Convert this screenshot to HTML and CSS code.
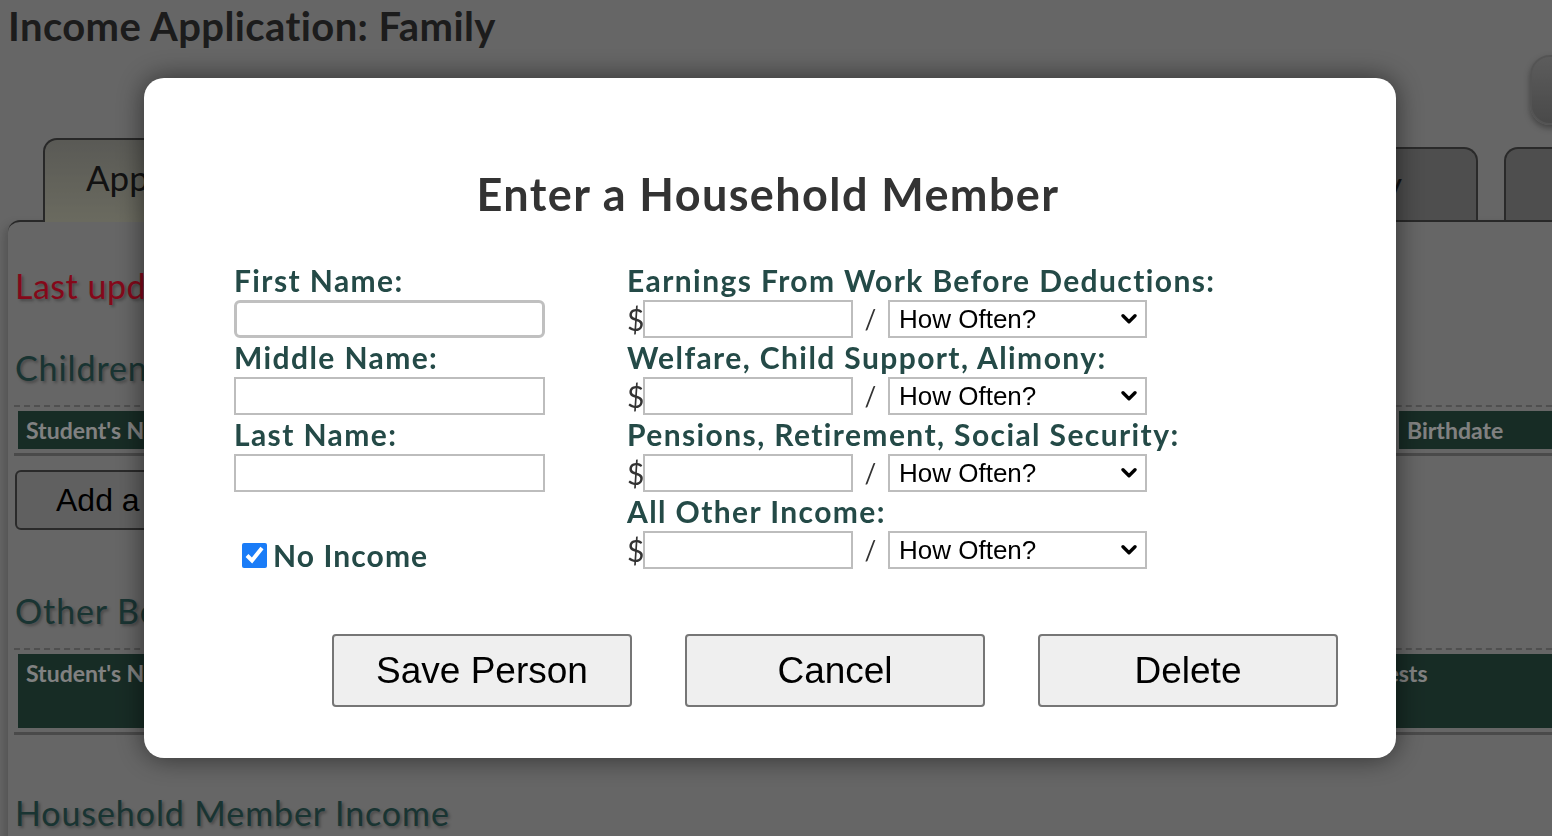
FILE: index.html
```html
<!DOCTYPE html>
<html lang="en">
<head>
<meta charset="utf-8">
<title>Income Application: Family</title>
<link rel="stylesheet" href="styles.css">
</head>
<body>
<div class="page">
  <h1 class="page-title">Income Application: Family</h1>
  <div class="toolbar"><button class="top-btn" type="button">Log Out</button></div>
  <div class="tabs">
    <div class="tab tab-active">Application</div>
    <div class="tab">Household</div>
    <div class="tab tab-end">Household Summary</div>
    <div class="tab tab-center">Submit</div>
  </div>
  <div class="panel">
    <p class="updated">Last updated: never</p>
    <h2 class="section">Children</h2>
    <div class="thead">
      <div class="th" style="width:420px">Student's Name</div>
      <div class="th" style="width:480px">School</div>
      <div class="th" style="width:469px">Grade</div>
      <div class="th th-last">Birthdate</div>
    </div>
    <button class="add-btn" type="button">Add a Child</button>
    <h2 class="section section-other">Other Benefits</h2>
    <div class="thead thead-tall">
      <div class="th" style="width:420px">Student's Name</div>
      <div class="th" style="width:480px">Program</div>
      <div class="th" style="width:400px">Case Number</div>
      <div class="th th-last">Interests</div>
    </div>
    <h2 class="section section-income">Household Member Income</h2>
  </div>
</div>

<div class="overlay">
  <div class="modal">
    <h2 class="modal-title">Enter a Household Member</h2>
    <div class="form">
      <div class="col-names">
        <label class="lbl" for="fn">First Name:</label>
        <input class="txt txt-focus" id="fn" type="text">
        <label class="lbl" for="mn">Middle Name:</label>
        <input class="txt" id="mn" type="text">
        <label class="lbl" for="ln">Last Name:</label>
        <input class="txt" id="ln" type="text">
        <label class="noinc"><input class="chk" type="checkbox" checked>No Income</label>
      </div>
      <div class="col-income">
        <div class="lbl">Earnings From Work Before Deductions:</div>
        <div class="inc-row">
          <span class="cur">$</span><input class="amt" type="text"><span class="slash">/</span>
          <div class="sel-wrap"><select class="sel"><option>How Often?</option></select><svg class="chev" viewBox="0 0 14 9"><path d="M1.6 1.6 L7 7 L12.4 1.6" /></svg></div>
        </div>
        <div class="lbl">Welfare, Child Support, Alimony:</div>
        <div class="inc-row">
          <span class="cur">$</span><input class="amt" type="text"><span class="slash">/</span>
          <div class="sel-wrap"><select class="sel"><option>How Often?</option></select><svg class="chev" viewBox="0 0 14 9"><path d="M1.6 1.6 L7 7 L12.4 1.6" /></svg></div>
        </div>
        <div class="lbl">Pensions, Retirement, Social Security:</div>
        <div class="inc-row">
          <span class="cur">$</span><input class="amt" type="text"><span class="slash">/</span>
          <div class="sel-wrap"><select class="sel"><option>How Often?</option></select><svg class="chev" viewBox="0 0 14 9"><path d="M1.6 1.6 L7 7 L12.4 1.6" /></svg></div>
        </div>
        <div class="lbl">All Other Income:</div>
        <div class="inc-row">
          <span class="cur">$</span><input class="amt" type="text"><span class="slash">/</span>
          <div class="sel-wrap"><select class="sel"><option>How Often?</option></select><svg class="chev" viewBox="0 0 14 9"><path d="M1.6 1.6 L7 7 L12.4 1.6" /></svg></div>
        </div>
      </div>
    </div>
    <div class="actions">
      <button class="btn" type="button">Save Person</button>
      <button class="btn" type="button">Cancel</button>
      <button class="btn" type="button">Delete</button>
    </div>
  </div>
</div>
</body>
</html>
```

FILE: styles.css
```css
* { box-sizing: border-box; }
html, body { margin: 0; height: 100%; overflow: hidden; }
body {
  background: #bababa;
  font-family: Lato, "Open Sans", sans-serif;
}

/* ---------- background page ---------- */
.page { width: 1552px; padding: 2px 0 0 8px; }
.page-title {
  margin: 0;
  font-size: 40px;
  line-height: 48px;
  font-weight: 700;
  letter-spacing: 0.4px;
  color: #333;
}
.toolbar { display: flex; justify-content: flex-end; margin-top: 5px; height: 70px; }
.top-btn {
  width: 200px;
  height: 70px;
  margin-right: -178px;
  border: 2px solid #9a9a9a;
  border-radius: 20px;
  background: linear-gradient(#a8a8a8, #868686);
  box-shadow: 0 3px 6px rgba(0,0,0,.35);
  color: transparent;
}
.tabs {
  display: flex;
  align-items: flex-end;
  gap: 26px;
  height: 82px;
  margin: 13px 0 0 35px;
  position: relative;
  z-index: 1;
}
.tab {
  flex: 0 0 461px;
  height: 73px;
  border: 2px solid #4d4d4d;
  border-bottom: none;
  border-radius: 14px 14px 0 0;
  background: #8e8e8e;
  padding: 12px 0 0 41px;
  font-size: 35px;
  line-height: 44px;
  color: #222;
  white-space: nowrap;
  overflow: hidden;
}
.tab-end { text-align: right; padding: 12px 74px 0 0; }
.tab-center { text-align: center; padding: 12px 0 0 0; }
.tab-active {
  height: 84px;
  margin-bottom: -2px;
  padding-top: 15px;
  background: linear-gradient(#a4a49c, #c2c2ae);
  border-color: #494949;
}
.panel {
  margin-right: -40px;
  border-top: 2px solid #4a4a4a;
  border-top-left-radius: 12px;
  box-shadow: -4px 4px 8px rgba(0,0,0,.18);
  padding: 0 0 40px 7px;
  height: 700px;
}
.updated {
  margin: 44px 0 0;
  font-size: 34px;
  line-height: 40px;
  letter-spacing: 0.5px;
  color: #f01030;
  text-shadow: 2px 2px 3px rgba(0,0,0,.3);
}
.section {
  margin: 42px 0 0;
  font-size: 34px;
  line-height: 40px;
  font-weight: 400;
  letter-spacing: 0.9px;
  color: #2f5f5c;
  text-shadow: 2px 2px 3px rgba(0,0,0,.3);
}
.thead {
  display: flex;
  gap: 4px;
  margin: 17px 0 0 -1px;
  padding: 4px;
  border-top: 2px dashed #909090;
  border-bottom: 3px solid #878787;
}
.th {
  flex: 0 0 auto;
  height: 38px;
  background: #2b5044;
  color: #ececec;
  font-weight: 700;
  font-size: 23px;
  line-height: 24px;
  padding: 7px 8px;
  white-space: nowrap;
  overflow: hidden;
}
.th-last { flex: 1 1 auto; }
.thead-tall .th { height: 74px; }
.add-btn {
  display: block;
  margin-top: 14px;
  width: 300px;
  height: 60px;
  border: 2px solid #4d4d4d;
  border-radius: 6px;
  background: #b0b0b0;
  font-family: "Liberation Sans", Arial, sans-serif;
  font-size: 32px;
  text-align: left;
  padding-left: 39px;
  color: #000;
}
.section-other { margin-top: 61px; }
.section-income { margin-top: 58px; }

/* ---------- modal ---------- */
.overlay {
  position: fixed;
  inset: 0;
  background: rgba(0,0,0,.45);
  z-index: 10;
}
.modal {
  position: absolute;
  left: 144px;
  top: 78px;
  width: 1252px;
  height: 680px;
  background: #fff;
  border-radius: 20px;
  box-shadow: 0 0 28px rgba(0,0,0,.55);
  padding-top: 88px;
}
.modal-title {
  margin: 0 0 0 -4px;
  text-align: center;
  font-size: 45px;
  line-height: 56px;
  font-weight: 700;
  letter-spacing: 1.4px;
  color: #333;
}
.form {
  display: flex;
  margin-top: 39px;
  padding-left: 90px;
}
.col-names {
  width: 393px;
  display: flex;
  flex-direction: column;
  align-items: flex-start;
}
.lbl {
  display: block;
  font-size: 30px;
  line-height: 39px;
  font-weight: 700;
  letter-spacing: 1.4px;
  color: #244a47;
  white-space: nowrap;
}
.txt {
  width: 311px;
  height: 38px;
  margin: 0;
  border: 2px solid #bdbdbd;
  border-radius: 0;
  background: #fff;
  outline: none;
}
.txt-focus {
  border: 3px solid #c0c0c0;
  border-radius: 6px;
}
.noinc {
  display: flex;
  align-items: center;
  margin-top: 43px;
  font-size: 30px;
  line-height: 40px;
  font-weight: 700;
  letter-spacing: 1.1px;
  color: #244a47;
}
.chk {
  width: 25px;
  height: 25px;
  margin: 0 6px 0 8px;
  accent-color: #1a7cf7;
}
.inc-row {
  display: flex;
  align-items: center;
  height: 38px;
}
.cur {
  width: 16px;
  font-size: 30px;
  line-height: 38px;
  color: #333;
}
.amt {
  width: 210px;
  height: 38px;
  margin: 0;
  border: 2px solid #bdbdbd;
  border-radius: 0;
}
.slash {
  width: 35px;
  text-align: center;
  font-size: 26px;
  line-height: 38px;
  color: #333;
}
.sel-wrap {
  position: relative;
  width: 259px;
  height: 38px;
}
.sel {
  appearance: none;
  -webkit-appearance: none;
  width: 100%;
  height: 100%;
  margin: 0;
  border: 2px solid #bdbdbd;
  border-radius: 0;
  background: #fff;
  padding: 0 0 0 9px;
  font-family: "Liberation Sans", Arial, sans-serif;
  font-size: 26px;
  color: #000;
}
.chev {
  position: absolute;
  right: 10px;
  top: 14px;
  width: 16px;
  height: 10px;
  fill: none;
  stroke: #000;
  stroke-width: 3;
  stroke-linecap: round;
  stroke-linejoin: round;
  pointer-events: none;
}
.actions {
  display: flex;
  gap: 53px;
  padding-left: 188px;
  margin-top: 59px;
}
.btn {
  width: 300px;
  height: 73px;
  border: 2px solid #767676;
  border-radius: 4px;
  background: #efefef;
  font-family: "Liberation Sans", Arial, sans-serif;
  font-size: 37px;
  color: #000;
}
```
